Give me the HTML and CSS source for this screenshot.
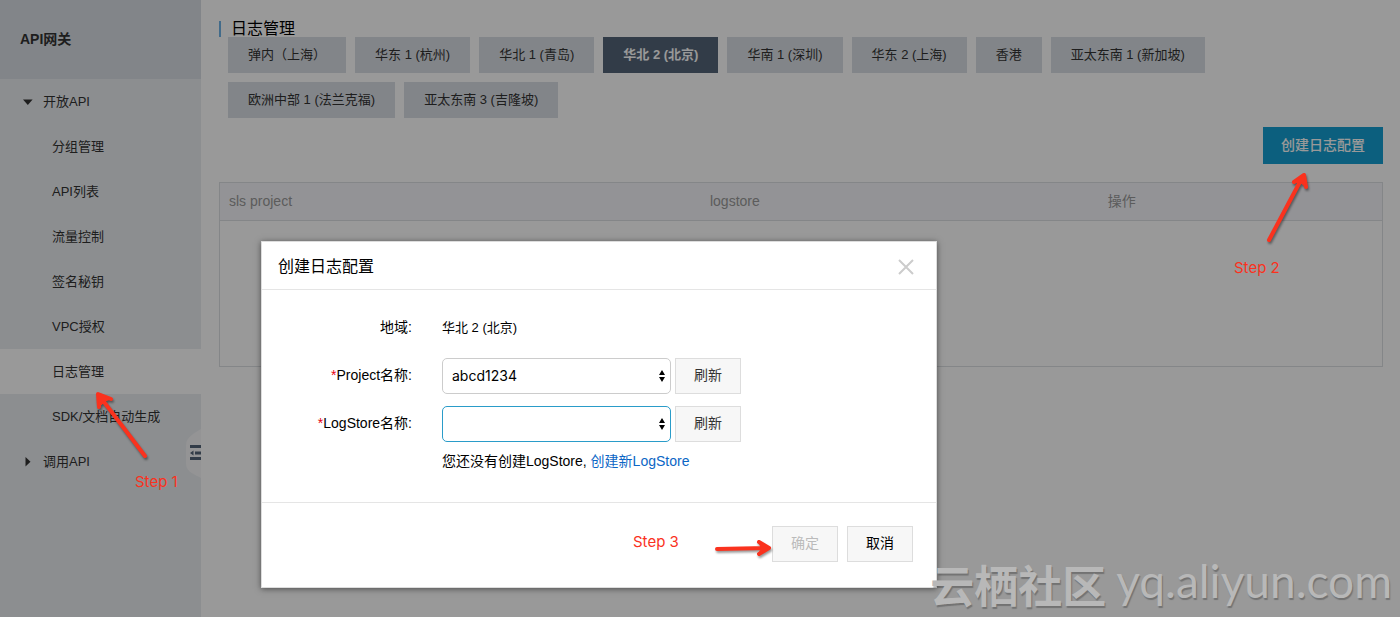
FILE: index.html
```html
<!DOCTYPE html>
<html lang="zh-CN">
<head>
<meta charset="utf-8">
<title>API网关 - 日志管理</title>
<link rel="stylesheet" href="styles.css">
</head>
<body>
<div class="app">
  <aside class="sidebar">
    <div class="product">API网关</div>
    <nav class="nav">
      <button class="group" type="button">
        <svg class="caret" viewBox="0 0 10 10"><path d="M0 2.5h9.6L4.8 8z"/></svg>开放API
      </button>
      <a class="item" href="#">分组管理</a>
      <a class="item" href="#">API列表</a>
      <a class="item" href="#">流量控制</a>
      <a class="item" href="#">签名秘钥</a>
      <a class="item" href="#">VPC授权</a>
      <a class="item active" href="#">日志管理</a>
      <a class="item" href="#">SDK/文档自动生成</a>
      <button class="group" type="button">
        <svg class="caret" viewBox="0 0 10 10"><path d="M2.5 0v9.6L7.5 4.8z"/></svg>调用API
      </button>
    </nav>
    <button class="collapse" type="button" aria-label="收起菜单">
      <svg viewBox="0 0 16 50" width="16" height="50">
        <path class="collapse-bg" d="M16 0C11 3 1 8 1 16v19c0 8 10 11 15 14z"/>
        <path class="collapse-bars" d="M5 16h11v3H5zM10 22.500h6v3h-6zM5 28h11v3H5zM5 24l3.500-2.500v5z"/>
      </svg>
    </button>
  </aside>

  <main class="main">
    <h1 class="title">日志管理</h1>
    <div class="regions">
      <button class="region" type="button">弹内（上海）</button>
      <button class="region" type="button">华东 1 (杭州)</button>
      <button class="region" type="button">华北 1 (青岛)</button>
      <button class="region selected" type="button">华北 2 (北京)</button>
      <button class="region" type="button">华南 1 (深圳)</button>
      <button class="region" type="button">华东 2 (上海)</button>
      <button class="region" type="button">香港</button>
      <button class="region" type="button">亚太东南 1 (新加坡)</button>
      <button class="region" type="button">欧洲中部 1 (法兰克福)</button>
      <button class="region" type="button">亚太东南 3 (吉隆坡)</button>
    </div>
    <div class="toolbar"><button class="primary" type="button">创建日志配置</button></div>
    <table class="table">
      <thead><tr><th class="col-project">sls project</th><th class="col-store">logstore</th><th>操作</th></tr></thead>
      <tbody><tr><td colspan="3"></td></tr></tbody>
    </table>
  </main>
</div>

<div class="overlay">
  <form class="dialog" role="dialog" aria-labelledby="dialog-title">
    <header class="dialog-head">
      <h2 id="dialog-title">创建日志配置</h2>
      <button class="close" type="button" aria-label="关闭">
        <svg viewBox="0 0 16 16" width="16" height="16"><path d="M1 1l14 14M15 1L1 15"/></svg>
      </button>
    </header>
    <div class="dialog-body">
      <div class="row">
        <span class="label">地域:</span>
        <span>华北 2 (北京)</span>
      </div>
      <div class="row">
        <label class="label" for="project"><span class="required">*</span>Project名称:</label>
        <div class="control">
          <div class="select">
            <select id="project"><option>abcd1234</option></select>
            <svg class="arrows" viewBox="0 0 6 12" width="6" height="12"><path d="M0 5l3-5 3 5zM0 7h6l-3 5z"/></svg>
          </div>
          <button class="button" type="button">刷新</button>
        </div>
      </div>
      <div class="row">
        <label class="label" for="logstore"><span class="required">*</span>LogStore名称:</label>
        <div class="control">
          <div class="select">
            <select id="logstore" class="focused"><option></option></select>
            <svg class="arrows" viewBox="0 0 6 12" width="6" height="12"><path d="M0 5l3-5 3 5zM0 7h6l-3 5z"/></svg>
          </div>
          <button class="button" type="button">刷新</button>
        </div>
      </div>
      <p class="hint">您还没有创建LogStore, <a href="#">创建新LogStore</a></p>
    </div>
    <footer class="dialog-foot">
      <button class="button" type="submit" disabled>确定</button>
      <button class="button dark" type="button">取消</button>
    </footer>
  </form>
</div>

<svg class="arrow arrow-1" viewBox="0 0 60 75" width="60" height="75"><path d="M54 66L10 8M8 17L7 4l13 5"/><path class="tip" d="M7 4l13 5-6 2-6 6z"/></svg>
<svg class="arrow arrow-2" viewBox="0 0 50 75" width="50" height="75"><path d="M8 68L41 6M33 10l10-7 2 12"/><path class="tip" d="M43 3l2 12-5-4-7-1z"/></svg>
<svg class="arrow arrow-3" viewBox="0 0 64 24" width="64" height="24"><path d="M5 13l50-1M47 6l10 6-10 6"/><path class="tip" d="M57 12l-10 6 2-6-2-6z"/></svg>
<span class="step step-1">Step 1</span>
<span class="step step-2">Step 2</span>
<span class="step step-3">Step 3</span>
<div class="watermark"><b>云栖社区</b><span class="domain">yq.aliyun.com</span></div>
</body>
</html>
```

FILE: styles.css
```css
* { box-sizing: border-box; }
body {
  margin: 0;
  position: relative;
  min-height: 100vh;
  overflow: hidden;
  background: #fff;
  color: #333;
  font: 13px/20px "Liberation Sans", "Noto Sans CJK SC", sans-serif;
}
button, select { font: inherit; color: inherit; margin: 0; cursor: pointer; }
h1, h2, p { margin: 0; font-weight: normal; }
a { text-decoration: none; color: inherit; }

.app { display: flex; min-height: 100vh; }

/* Sidebar */
.sidebar { position: relative; flex: 0 0 201px; background: #eaedf1; }
.product {
  display: flex; align-items: center;
  height: 79px; padding: 0 0 2px 20px;
  background: #d9dee4;
  font-size: 14px; font-weight: bold;
}
.nav { display: flex; flex-direction: column; }
.group {
  display: flex; align-items: center; gap: 10px;
  height: 45px; padding: 0 0 0 23px;
  border: 0; background: none;
}
.caret { width: 10px; height: 10px; fill: #333; }
.item { display: flex; align-items: center; height: 45px; padding-left: 52px; }
.item.active { background: #fff; }
.collapse {
  position: absolute; right: 0; top: 429px;
  padding: 0; border: 0; background: none; line-height: 0;
}
.collapse-bg { fill: #f7f7f8; }
.collapse-bars { fill: #546478; }

/* Main column */
.main { flex: 1; min-width: 0; padding: 21px 17px 0 18px; }
.title {
  padding-left: 10px;
  border-left: 2px solid #6fb3e6;
  font-size: 16px; line-height: 16px; color: #000;
}
.regions { display: flex; flex-wrap: wrap; gap: 9px; padding: 0 40px 0 9px; }
.region { height: 36px; padding: 0 20px; border: 0; background: #d9dee4; }
.region.selected { background: #546478; color: #fff; font-weight: bold; }
.toolbar { display: flex; justify-content: flex-end; margin: 9px 0 18px; }
.primary {
  height: 37px; padding: 0 18px 2px; border: 0;
  background: #149fd2; color: #fff; font-size: 14px; font-weight: 500;
}
.table {
  width: 100%; table-layout: fixed;
  border-collapse: collapse; border: 1px solid #dcdfe3;
}
.table th {
  height: 38px; padding: 0 9px 2px;
  border-bottom: 1px solid #dcdfe3;
  background: #f5f6fa; color: #999;
  font-size: 14px; font-weight: normal; text-align: left;
}
.table td { height: 146px; }
.col-project { width: 41.4%; }
.col-store { width: 34.2%; }

/* Dialog */
.overlay {
  position: absolute; inset: 0;
  display: flex; align-items: flex-start;
  padding: 241px 0 0 261px;
  background: rgba(0, 0, 0, .4);
}
.dialog {
  width: 676px; background: #fff; color: #000;
  border: 1px solid #ddd;
  box-shadow: 0 1px 6px rgba(0, 0, 0, .5);
}
.dialog-head {
  display: flex; align-items: center; justify-content: space-between;
  height: 48px; padding: 2px 22px 0 16px;
  border-bottom: 1px solid #e5e5e5;
}
.dialog-head h2 { font-size: 16px; }
.close { padding: 0; border: 0; background: none; line-height: 0; }
.close path { stroke: #ccc; stroke-width: 2; }
.dialog-body {
  display: flex; flex-direction: column; gap: 12px;
  height: 212px; padding-top: 20px;
}
.row {
  display: grid; grid-template-columns: 150px 1fr;
  column-gap: 30px; align-items: center; min-height: 36px;
}
.label { padding-bottom: 2px; text-align: right; font-size: 14px; }
.required { color: #e60012; }
.control { display: flex; gap: 4px; }
.select { position: relative; width: 229px; }
.select select {
  appearance: none;
  width: 100%; height: 36px; padding: 0 20px 0 9px;
  border: 1px solid #ccc; border-radius: 5px; background: #fff;
  font-family: Inter, sans-serif; font-size: 14px;
}
.select .focused { border-color: #2a9cc9; }
.arrows { position: absolute; right: 6px; top: 12px; pointer-events: none; }
.button {
  height: 36px; padding: 0 18px 2px;
  border: 1px solid #ddd; background: #f7f7f7;
  color: #333; font-size: 14px;
}
.button.dark { color: #000; }
.button:disabled { color: #bbb; cursor: default; }
.hint { padding-left: 180px; font-size: 14px; line-height: 14px; }
.hint a { color: #0c66c5; }
.dialog-foot {
  display: flex; justify-content: flex-end; gap: 9px;
  padding: 23px 23px 25px;
  border-top: 1px solid #e5e5e5;
}

/* Walkthrough marks */
.arrow { position: absolute; filter: drop-shadow(1px 2px 1px rgba(0, 0, 0, .4)); }
.arrow path { fill: none; stroke: #fa321e; stroke-width: 4; stroke-linecap: round; stroke-linejoin: round; }
.arrow .tip { fill: #fa321e; stroke-width: 1; }
.arrow-1 { left: 91px; top: 390px; }
.arrow-2 { left: 1261px; top: 172px; }
.arrow-3 { left: 712px; top: 536px; }
.step { position: absolute; color: #fa321e; font: 15px/20px Inter, sans-serif; }
.step-1 { left: 135px; top: 472px; }
.step-2 { left: 1234px; top: 258px; }
.step-3 { left: 633px; top: 532px; }
.watermark {
  position: absolute; right: 8px; bottom: 0;
  display: flex; align-items: center; gap: 10px;
  color: #b8b8b8; text-shadow: 1px 2px 1px rgba(0, 0, 0, .25);
  font: 44px/60px "Noto Sans CJK SC", sans-serif;
}
.domain { padding-bottom: 6px; font-family: Lato, sans-serif; font-size: 46px; }
```
